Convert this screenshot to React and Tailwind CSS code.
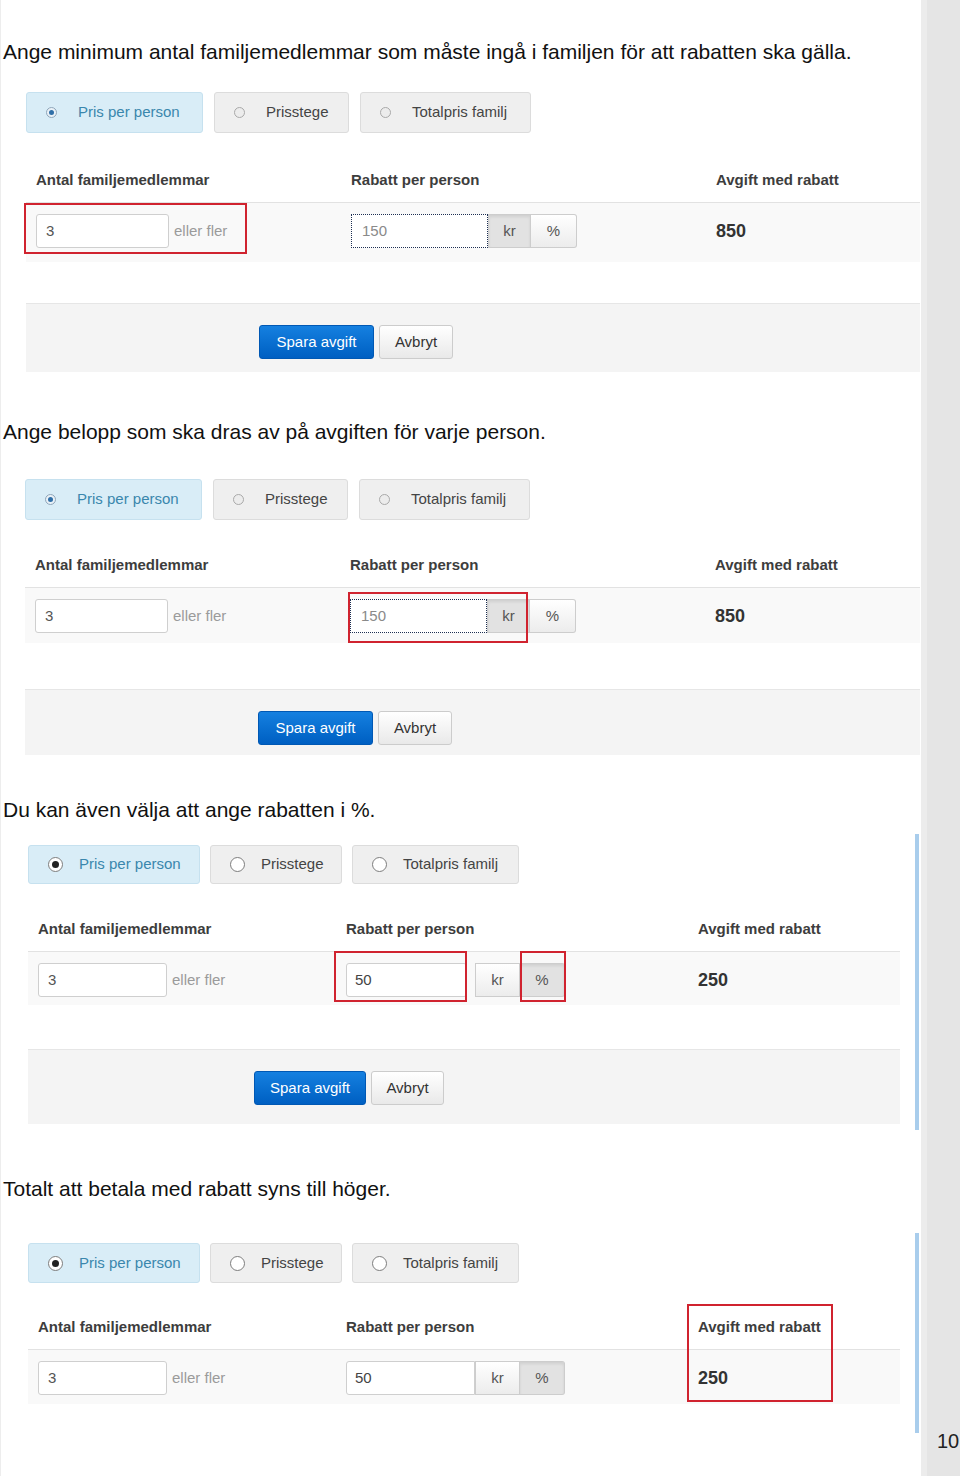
import React from 'react'

// two looks: the older, slightly scaled screenshots (1, 2) and the crisp ones (3, 4)
const OLD = {
  tabH: 'h-[41px]',
  tabW: ['w-[177px]', 'w-[135px]', 'w-[171px]'],
  tabGap: 'gap-[11px]',
  col1: 'w-[315px]',
  col2: 'w-[365px]',
  in1: 'w-[133px]',
  small: true,
}

const NEW = {
  tabH: 'h-[39px]',
  tabW: ['w-[172px]', 'w-[132px]', 'w-[167px]'],
  tabGap: 'gap-[10px]',
  col1: 'w-[308px]',
  col2: 'w-[352px]',
  in1: 'w-[129px]',
  small: false,
}

const Radio = ({ checked, small }) => {
  if (small) {
    return (
      <span
        className={`flex h-[11px] w-[11px] shrink-0 items-center justify-center rounded-full border ${
          checked ? 'border-[#8fa6ba] bg-[#e9f1f7]' : 'border-[#a9a9a9] bg-[#ececec]'
        }`}
      >
        {checked && <span className="h-[5px] w-[5px] rounded-full bg-[#2f6fa8]" />}
      </span>
    )
  }
  return (
    <span className="flex h-[15px] w-[15px] shrink-0 items-center justify-center rounded-full border border-[#7d7d7d] bg-white">
      {checked && <span className="h-[7px] w-[7px] rounded-full bg-[#222]" />}
    </span>
  )
}

const Tabs = ({ cfg }) => {
  const labels = ['Pris per person', 'Prisstege', 'Totalpris familj']
  return (
    <div className={`flex ${cfg.tabGap} ${cfg.tabH}`}>
      {labels.map((label, i) => (
        <div
          key={label}
          className={`flex items-center rounded-[3px] border pl-[19px] text-[15px] ${cfg.tabW[i]} ${
            i === 0
              ? 'border-[#c6e1ef] bg-[#d9edf7] text-[#3a87ad]'
              : 'border-[#dcdcdc] bg-[#efefef] text-[#444]'
          }`}
        >
          <Radio checked={i === 0} small={cfg.small} />
          <span className={cfg.small ? 'ml-[21px]' : 'ml-[16px]'}>{label}</span>
        </div>
      ))}
    </div>
  )
}

const Addon = ({ children, active, last, w }) => (
  <span
    className={`flex h-[34px] items-center justify-center border border-[#cdcdcd] text-[15px] text-[#555] ${w} ${
      last ? 'rounded-r-[3px] border-l-0' : ''
    } ${active ? 'bg-[#e2e2e2] shadow-[inset_0_2px_3px_rgba(0,0,0,0.08)]' : 'bg-linear-to-b from-white to-[#ececec]'}`}
  >
    {children}
  </span>
)

const Header = ({ cfg, h }) => (
  <div className={`flex items-end pb-[11px] pl-[10px] text-[15px] font-bold text-[#3d3d3d] ${h}`}>
    <div className={cfg.col1}>Antal familjemedlemmar</div>
    <div className={cfg.col2}>Rabatt per person</div>
    <div>Avgift med rabatt</div>
  </div>
)

const Row = ({ cfg, h, rate, total, focus, pct, gap }) => (
  <div className={`flex border-t border-[#e2e2e2] bg-[#f9f9f9] pl-[10px] pt-[11px] ${h}`}>
    <div className={`flex h-[34px] items-center ${cfg.col1}`}>
      <span className={`flex h-[34px] items-center rounded-[3px] border border-[#cfcfcf] bg-white pl-[9px] text-[15px] text-[#555] ${cfg.in1}`}>
        3
      </span>
      <span className="ml-[5px] text-[15px] text-[#9b9b9b]">eller fler</span>
    </div>
    <div className={`flex h-[34px] items-center ${cfg.col2}`}>
      {focus ? (
        <span className="flex h-[34px] w-[137px] items-center border border-dotted border-[#1d2f52] bg-white pl-[10px] text-[15px] text-[#8a8a8a]">
          {rate}
        </span>
      ) : (
        <span
          className={`flex h-[34px] items-center border border-[#cfcfcf] bg-white pl-[8px] text-[15px] text-[#444] ${
            gap ? 'w-[121px] rounded-[3px]' : 'w-[129px] rounded-l-[3px]'
          }`}
        >
          {rate}
        </span>
      )}
      <span className={gap ? 'ml-[8px] flex' : 'flex'}>
        <Addon active={!pct} w={focus ? 'w-[43px]' : 'w-[45px]'}>
          kr
        </Addon>
        <Addon active={pct} last w={focus ? 'w-[46px]' : 'w-[45px]'}>
          %
        </Addon>
      </span>
    </div>
    <div className="flex h-[34px] items-center text-[18px] font-bold text-[#333]">{total}</div>
  </div>
)

const Footer = ({ h, pl, wide }) => (
  <div className={`flex items-start border-t border-[#e6e6e6] bg-[#f4f4f4] pt-[21px] ${h} ${pl}`}>
    <button
      className={`h-[34px] rounded-[3px] border border-[#0058b4] bg-linear-to-b from-[#1580e0] to-[#005fc2] text-[15px] text-white ${
        wide ? 'w-[115px]' : 'w-[112px]'
      }`}
    >
      Spara avgift
    </button>
    <button
      className={`ml-[5px] h-[34px] rounded-[3px] border border-[#cccccc] bg-linear-to-b from-white to-[#e9e9e9] text-[15px] text-[#333] ${
        wide ? 'w-[74px]' : 'w-[73px]'
      }`}
    >
      Avbryt
    </button>
  </div>
)

const Mark = ({ className }) => (
  <span className={`pointer-events-none absolute border-2 border-[#d0232f] ${className}`} />
)

const Caption = ({ children, mt }) => (
  <p className={`pl-[2px] text-[21px] leading-[28px] text-[#111] ${mt}`}>{children}</p>
)

export default function App() {
  return (
    <div className="flex min-h-[1476px] bg-white font-['Liberation_Sans',Arial,sans-serif]">
      <div className="w-[921px] shrink-0 border-l border-[#ededed]">
        {/* 1 */}
        <Caption mt="mt-[38px]">
          Ange minimum antal familjemedlemmar som måste ingå i familjen för att rabatten ska gälla.
        </Caption>
        <div className="ml-[25px] mt-[26px] w-[894px]">
          <Tabs cfg={OLD} />
          <div className="relative">
            <Header cfg={OLD} h="h-[69px]" />
            <Row cfg={OLD} h="h-[60px]" rate="150" total="850" focus />
            <Mark className="left-[-2px] top-[70px] h-[51px] w-[223px]" />
          </div>
          <div className="mt-[41px]">
            <Footer h="h-[69px]" pl="pl-[233px]" wide />
          </div>
        </div>

        {/* 2 */}
        <Caption mt="mt-[46px]">Ange belopp som ska dras av på avgiften för varje person.</Caption>
        <div className="ml-[24px] mt-[33px] w-[895px]">
          <Tabs cfg={OLD} />
          <div className="relative">
            <Header cfg={OLD} h="h-[67px]" />
            <Row cfg={OLD} h="h-[56px]" rate="150" total="850" focus />
            <Mark className="left-[323px] top-[72px] h-[51px] w-[180px]" />
          </div>
          <div className="mt-[46px]">
            <Footer h="h-[66px]" pl="pl-[233px]" wide />
          </div>
        </div>

        {/* 3 */}
        <Caption mt="mt-[41px]">Du kan även välja att ange rabatten i %.</Caption>
        <div className="mt-[10px] w-[918px] border-r-4 border-[#a9cdec] pb-[6px] pt-[11px]">
          <div className="ml-[27px] w-[872px]">
            <Tabs cfg={NEW} />
            <div className="relative">
              <Header cfg={NEW} h="h-[67px]" />
              <Row cfg={NEW} h="h-[54px]" rate="50" total="250" pct gap />
              <Mark className="left-[306px] top-[67px] h-[51px] w-[133px]" />
              <Mark className="left-[492px] top-[67px] h-[51px] w-[46px]" />
            </div>
            <div className="mt-[44px]">
              <Footer h="h-[75px]" pl="pl-[226px]" />
            </div>
          </div>
        </div>

        {/* 4 */}
        <Caption mt="mt-[45px]">Totalt att betala med rabatt syns till höger.</Caption>
        <div className="mt-[30px] w-[918px] border-r-4 border-[#a9cdec] pb-[29px] pt-[10px]">
          <div className="ml-[27px] w-[872px]">
            <Tabs cfg={{ ...NEW, tabH: 'h-[40px]' }} />
            <div className="relative">
              <Header cfg={NEW} h="h-[66px]" />
              <Row cfg={NEW} h="h-[55px]" rate="50" total="250" pct />
              <Mark className="left-[659px] top-[21px] h-[98px] w-[146px]" />
            </div>
          </div>
        </div>
      </div>

      <div className="flex w-[39px] shrink-0 flex-col justify-end border-l-[6px] border-[#ececec] bg-[#e5e5e5] pb-[23px] pl-[10px]">
        <span className="text-[20px] leading-[24px] text-[#222]">10</span>
      </div>
    </div>
  )
}
